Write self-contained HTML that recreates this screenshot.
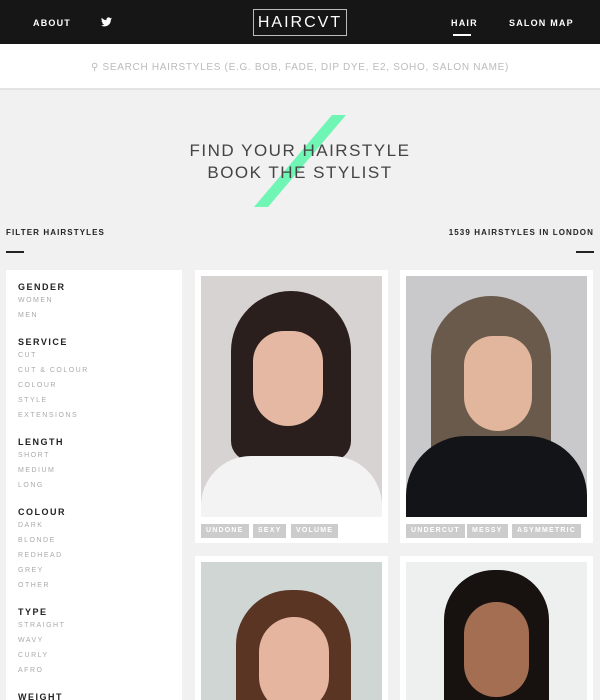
<!DOCTYPE html>
<html><head><style>
*{margin:0;padding:0;box-sizing:border-box}
html,body{width:600px;height:700px;overflow:hidden}
body{background:#f1f1f1;font-family:"Liberation Sans",sans-serif;position:relative}
.hd{position:absolute;left:0;top:0;width:600px;height:44px;background:#161616;color:#fff;font-size:9px;font-weight:bold;letter-spacing:1.2px}
.hd span{position:absolute;top:18px}
.logo{position:absolute;left:253px;top:9px;width:94px;height:27px;border:1px solid #bbb;color:#fff;font-size:16px;letter-spacing:2px;text-align:center;line-height:25px;font-weight:normal}
.sr{position:absolute;left:0;top:44px;width:600px;height:46px;background:#fff;border-bottom:2px solid #e4e4e4;color:#bbb;font-size:10px;letter-spacing:0.7px;text-align:center;line-height:48px}
.t{position:absolute;font-size:8px;font-weight:bold;letter-spacing:1.1px;color:#222}
.ln{position:absolute;height:2px;width:18px;background:#222}
.side{position:absolute;left:6px;top:270px;width:176px;height:430px;background:#fff;padding:12px 12px;overflow:hidden}
.side h4{font-size:9px;letter-spacing:1.5px;color:#222;line-height:11px}
.side p{font-size:7px;letter-spacing:1.5px;color:#aaa;line-height:15px}
.side .g{margin-bottom:14px}
.card{position:absolute;background:#fff;width:193px;height:273px;overflow:hidden}
.ph{position:absolute;left:6px;top:6px;width:181px;height:241px;overflow:hidden}
.tag{position:absolute;top:254px;height:14px;background:#ccc;color:#fff;font-size:7px;font-weight:bold;letter-spacing:1.2px;line-height:14px;padding:0 5px}
</style></head><body>
<div class="hd"><span style="left:33px">ABOUT</span>
<svg style="position:absolute;left:101px;top:17px" width="11" height="10" viewBox="0 0 24 20"><path fill="#fff" d="M24 2.4c-.9.4-1.8.7-2.8.8 1-.6 1.8-1.6 2.2-2.7-1 .6-2 1-3.1 1.2C19.3.7 18 0 16.6 0c-2.7 0-4.9 2.2-4.9 4.9 0 .4 0 .8.1 1.1C7.7 5.8 4.1 3.9 1.7.9c-.4.7-.7 1.6-.7 2.5 0 1.7.9 3.2 2.2 4.1-.8 0-1.6-.2-2.2-.6v.1c0 2.4 1.7 4.4 3.9 4.8-.4.1-.8.2-1.3.2-.3 0-.6 0-.9-.1.6 2 2.4 3.4 4.6 3.4-1.7 1.3-3.8 2.1-6.1 2.1-.4 0-.8 0-1.2-.1 2.2 1.4 4.8 2.2 7.5 2.2 9.1 0 14-7.5 14-14v-.6c1-.7 1.8-1.6 2.5-2.5z"/></svg>
<div class="logo">HAIRCVT</div>
<span style="left:451px">HAIR</span><div style="position:absolute;left:453px;top:34px;width:18px;height:2px;background:#fff"></div>
<span style="left:509px">SALON MAP</span></div>
<div class="sr">&#9906; SEARCH HAIRSTYLES (E.G. BOB, FADE, DIP DYE, E2, SOHO, SALON NAME)</div>
<svg style="position:absolute;left:0;top:0" width="600" height="700"><polygon points="332,115 346,115 268,207 254,207" fill="#6ff5b4"/></svg>
<div style="position:absolute;left:0;top:140px;width:600px;text-align:center;font-size:17px;letter-spacing:1.5px;color:#444;line-height:22px">FIND YOUR HAIRSTYLE<br>BOOK THE STYLIST</div>
<div class="t" style="left:6px;top:228px">FILTER HAIRSTYLES</div><div class="ln" style="left:6px;top:251px"></div>
<div class="t" style="right:6px;top:228px">1539 HAIRSTYLES IN LONDON</div><div class="ln" style="right:6px;top:251px"></div>
<div class="side">
<div class="g"><h4>GENDER</h4><p>WOMEN</p><p>MEN</p></div>
<div class="g"><h4>SERVICE</h4><p>CUT</p><p>CUT &amp; COLOUR</p><p>COLOUR</p><p>STYLE</p><p>EXTENSIONS</p></div>
<div class="g"><h4>LENGTH</h4><p>SHORT</p><p>MEDIUM</p><p>LONG</p></div>
<div class="g"><h4>COLOUR</h4><p>DARK</p><p>BLONDE</p><p>REDHEAD</p><p>GREY</p><p>OTHER</p></div>
<div class="g"><h4>TYPE</h4><p>STRAIGHT</p><p>WAVY</p><p>CURLY</p><p>AFRO</p></div>
<div class="g"><h4>WEIGHT</h4></div>
</div>
<div class="card" style="left:195px;top:270px"><div class="ph" style="background:#d8d3d3">
<div style="position:absolute;left:30px;top:15px;width:120px;height:170px;border-radius:60px 60px 20px 20px;background:#2a1f1c"></div>
<div style="position:absolute;left:52px;top:55px;width:70px;height:95px;border-radius:35px 35px 40px 40px;background:#e4b8a2"></div>
<div style="position:absolute;left:0;top:180px;width:181px;height:61px;background:#f3f3f3;border-radius:50px 50px 0 0"></div></div>
<div class="tag" style="left:6px">UNDONE</div><div class="tag" style="left:58px">SEXY</div><div class="tag" style="left:96px">VOLUME</div></div>
<div class="card" style="left:400px;top:270px"><div class="ph" style="background:#c9c9cb">
<div style="position:absolute;left:25px;top:20px;width:120px;height:200px;border-radius:60px 60px 20px 20px;background:#6a5a4c"></div>
<div style="position:absolute;left:58px;top:60px;width:68px;height:95px;border-radius:34px 34px 40px 40px;background:#e2b69d"></div>
<div style="position:absolute;left:0;top:160px;width:181px;height:81px;background:#121418;border-radius:60px 60px 0 0"></div></div>
<div class="tag" style="left:6px">UNDERCUT</div><div class="tag" style="left:67px">MESSY</div><div class="tag" style="left:112px">ASYMMETRIC</div></div>
<div class="card" style="left:195px;top:556px;height:144px"><div class="ph" style="background:#cfd6d4">
<div style="position:absolute;left:35px;top:28px;width:115px;height:200px;border-radius:55px;background:#5a3524"></div>
<div style="position:absolute;left:58px;top:55px;width:70px;height:95px;border-radius:35px;background:#e6b59f"></div></div></div>
<div class="card" style="left:400px;top:556px;height:144px"><div class="ph" style="background:#eef0f0">
<div style="position:absolute;left:38px;top:8px;width:105px;height:200px;border-radius:50px;background:#17120f"></div>
<div style="position:absolute;left:58px;top:40px;width:65px;height:95px;border-radius:32px;background:#a46e52"></div></div></div>
</body></html>
